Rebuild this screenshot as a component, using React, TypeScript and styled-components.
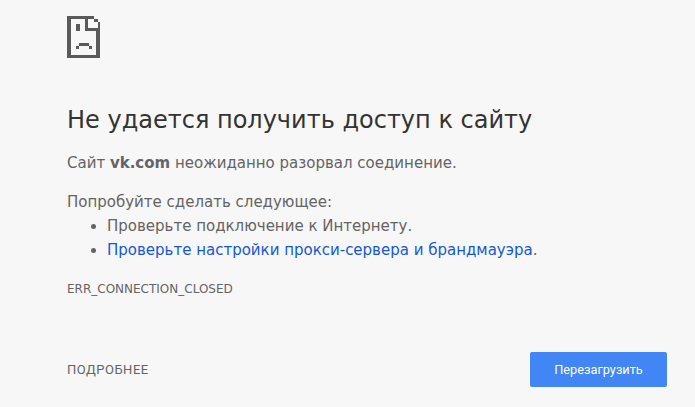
import React from "react";
import styled, { createGlobalStyle } from "styled-components";

const Global = createGlobalStyle`
  html, body { margin: 0; padding: 0; height: 100%; overflow: hidden; background: #f7f7f7; }
  #root { height: 100%; }
`;
const Page = styled.div`
  box-sizing: border-box;
  height: 407px;
  padding: 16px 28px 20px 67px;
  display: flex;
  flex-direction: column;
  font-family: "DejaVu Sans", sans-serif;
  font-size: 15px;
  color: #646464;
  background: #f7f7f7;
`;
const Sad = styled.svg`
  display: block;
  width: 33px;
  height: 42px;
  flex: none;
  shape-rendering: crispEdges;
`;
const Title = styled.h1`
  margin: 46px 0 0;
  font-weight: 400;
  font-size: 24px;
  line-height: 32px;
  color: #333;
`;
const Para = styled.p`
  margin: 15px 0 0;
  font-size: 15px;
  line-height: 24px;
  b { font-weight: 700; }
`;
const List = styled.ul`
  margin: 0;
  padding: 0 0 0 40px;
  font-size: 15px;
  line-height: 24px;
`;
const Link = styled.a`
  color: #1558d6;
  text-decoration: none;
`;
const Code = styled.div`
  margin-top: 19px;
  font-size: 12px;
  line-height: 16px;
`;
const Footer = styled.div`
  margin-top: auto;
  display: flex;
  justify-content: space-between;
  align-items: center;
`;
const Details = styled.span`
  font-family: Roboto, sans-serif;
  font-size: 13px;
  letter-spacing: 0.5px;
`;
const Reload = styled.button`
  width: 137px;
  height: 35px;
  border: 0;
  border-radius: 2px;
  background: #4285f4;
  color: #fff;
  font-family: Roboto, sans-serif;
  font-size: 12.75px;
`;

export default function App() {
  return (
    <>
      <Global />
      <Page>
        <Sad viewBox="0 0 33 42" fill="#5a5a5a">
          <path
            fillRule="evenodd"
            d="M0 0H27V3H31V6H33V42H0ZM4 3V39H29V15H18V3ZM21 3V12H31V6H27V3Z"
          />
          <path d="M9 8H13V15H9ZM12 27H22V30H12ZM9 30H12V33H9ZM22 30H25V33H22Z" />
        </Sad>
        <Title>Не удается получить доступ к сайту</Title>
        <Para>Сайт <b>vk.com</b> неожиданно разорвал соединение.</Para>
        <Para>Попробуйте сделать следующее:</Para>
        <List>
          <li>Проверьте подключение к Интернету.</li>
          <li><Link>Проверьте настройки прокси-сервера и брандмауэра</Link>.</li>
        </List>
        <Code>ERR_CONNECTION_CLOSED</Code>
        <Footer>
          <Details>ПОДРОБНЕЕ</Details>
          <Reload>Перезагрузить</Reload>
        </Footer>
      </Page>
    </>
  );
}
